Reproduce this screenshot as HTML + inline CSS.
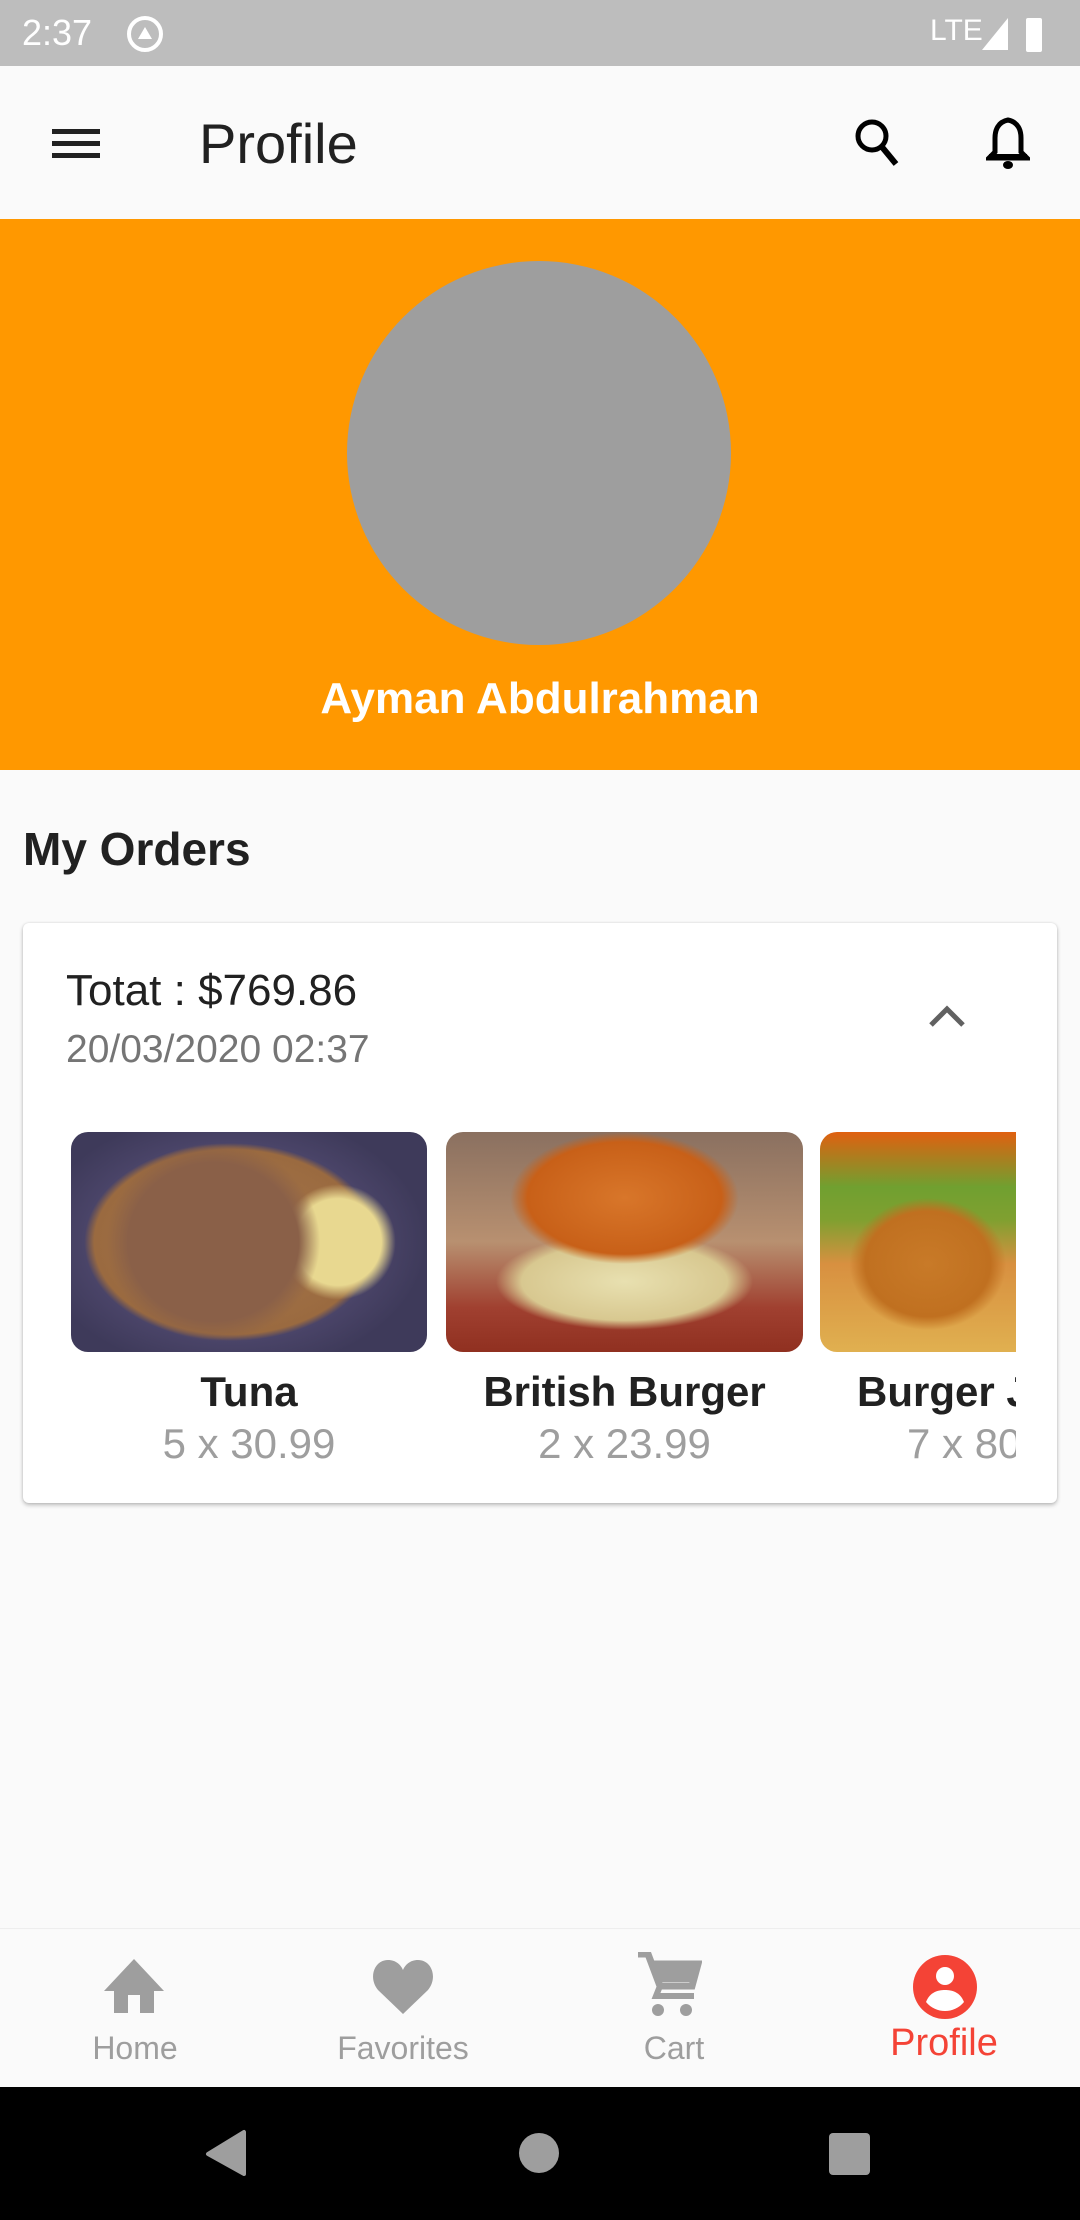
<!DOCTYPE html>
<html><head><meta charset="utf-8"><style>
*{margin:0;padding:0;box-sizing:border-box}
body{width:1080px;height:2220px;background:#fafafa;font-family:"Liberation Sans",sans-serif;position:relative;overflow:hidden}
.abs{position:absolute}
.status{left:0;top:0;width:1080px;height:66px;background:#bdbdbd}
.appbar{left:0;top:66px;width:1080px;height:153px;background:#fafafa}
.orange{left:0;top:219px;width:1080px;height:551px;background:#ff9800}
.card{left:23px;top:923px;width:1034px;height:580px;background:#fff;border-radius:6px;box-shadow:0 2px 4px rgba(0,0,0,.25),0 0 2px rgba(0,0,0,.1)}
.img{top:1132px;height:220px;border-radius:17px;overflow:hidden}
.t{text-align:center;font-weight:bold;color:#212121;font-size:42px}
.q{text-align:center;color:#9e9e9e;font-size:42px}
.nav{left:0;top:1928px;width:1080px;height:159px;background:#fafafa;border-top:1px solid #eee}
.lbl{width:270px;text-align:center;font-size:32px;color:#9e9e9e;top:2030px}
</style></head><body>
<div class="abs status"></div>
<div class="abs" style="left:22px;top:12px;font-size:36px;color:#fff">2:37</div>
<svg class="abs" style="left:125px;top:14px" width="40" height="40" viewBox="0 0 40 40"><circle cx="20" cy="20" r="16" fill="none" stroke="#fff" stroke-width="4"/><path d="M13 25 L20 13 L27 25 Z" fill="#fff"/></svg>
<div class="abs" style="left:930px;top:14px;font-size:30px;color:#fff">LTE</div>
<svg class="abs" style="left:980px;top:14px" width="70" height="40" viewBox="0 0 70 40"><path d="M2 36 L28 4 L28 36 Z" fill="#fff"/><rect x="46" y="4" width="16" height="34" rx="2" fill="#fff"/></svg>
<div class="abs appbar"></div>
<svg class="abs" style="left:50px;top:126px" width="52" height="36" viewBox="0 0 52 36"><rect x="2" y="3" width="48" height="5" fill="#212121"/><rect x="2" y="15" width="48" height="5" fill="#212121"/><rect x="2" y="27" width="48" height="5" fill="#212121"/></svg>
<div class="abs" style="left:199px;top:111px;font-size:56px;color:#212121">Profile</div>
<svg class="abs" style="left:852px;top:116px" width="50" height="54" viewBox="0 0 50 54"><circle cx="20" cy="20" r="14" fill="none" stroke="#000" stroke-width="5"/><path d="M30 31 L44 48" stroke="#000" stroke-width="6"/></svg>
<svg class="abs" style="left:986px;top:116px" width="44" height="56" viewBox="0 0 44 56"><path d="M22 4 C12 6 9 14 9 22 L9 36 L3 42 L41 42 L35 36 L35 22 C35 14 32 6 22 4 Z" fill="none" stroke="#000" stroke-width="5"/><rect x="3" y="38" width="38" height="6" fill="#000"/><ellipse cx="22" cy="49" rx="5" ry="4" fill="#000"/></svg>
<div class="abs orange"></div>
<div class="abs" style="left:347px;top:261px;width:384px;height:384px;border-radius:50%;background:#9e9e9e"></div>
<div class="abs" style="left:0;top:674px;width:1080px;text-align:center;color:#fff;font-weight:bold;font-size:44px">Ayman Abdulrahman</div>
<div class="abs" style="left:23px;top:822px;font-weight:bold;font-size:46px;color:#212121">My Orders</div>
<div class="abs card"></div>
<div class="abs" style="left:66px;top:966px;font-size:44px;color:#212121">Totat : $769.86</div>
<div class="abs" style="left:66px;top:1028px;font-size:39px;color:#757575">20/03/2020 02:37</div>
<svg class="abs" style="left:927px;top:1003px" width="40" height="26" viewBox="0 0 40 26"><path d="M4 22 L20 6 L36 22" fill="none" stroke="#616161" stroke-width="5"/></svg>
<div class="abs img" style="left:71px;width:356px;background:radial-gradient(ellipse 30% 45% at 40% 50%,#8a6048 0,#8a6048 80%,transparent 100%),radial-gradient(circle at 75% 50%,#e8d890 0,#e8d890 15%,transparent 20%),radial-gradient(ellipse 55% 60% at 45% 50%,#a8784a 0,#9a6a40 70%,#4a4468 75%,#3e3a5a 100%)"></div>
<div class="abs img" style="left:446px;width:357px;background:radial-gradient(ellipse 32% 30% at 50% 30%,#d8762a 0,#c86018 85%,transparent 100%),radial-gradient(ellipse 36% 22% at 50% 68%,#e8e0b0 0,#d8c890 80%,transparent 100%),linear-gradient(#8a7060 0%,#b89070 50%,#a04030 80%,#903020 100%)"></div>
<div style="position:absolute;left:820px;top:1132px;width:196px;height:220px;border-radius:17px 0 0 17px;overflow:hidden;background:radial-gradient(ellipse 40% 30% at 55% 60%,#c87a28 0,#c07020 80%,transparent 100%),linear-gradient(#e06010 0%,#70a030 25%,#80a030 40%,#d89040 60%,#e0b050 100%)"></div>
<div class="abs t" style="left:71px;width:356px;top:1368px">Tuna</div>
<div class="abs q" style="left:71px;width:356px;top:1420px">5 x 30.99</div>
<div class="abs t" style="left:446px;width:357px;top:1368px">British Burger</div>
<div class="abs q" style="left:446px;width:357px;top:1420px">2 x 23.99</div>
<div class="abs" style="left:820px;top:1368px;width:196px;height:110px;overflow:hidden">
<div class="t" style="position:absolute;left:37px;top:0;white-space:nowrap">Burger Jr</div>
<div class="q" style="position:absolute;left:87px;top:52px;white-space:nowrap">7 x 80</div></div>
<div class="abs nav"></div>
<svg class="abs" style="left:102px;top:1955px" width="64" height="60" viewBox="0 0 64 60"><path d="M32 4 L62 36 L52 36 L52 58 L38 58 L38 40 L26 40 L26 58 L12 58 L12 36 L2 36 Z" fill="#9e9e9e"/></svg>
<svg class="abs" style="left:370px;top:1956px" width="66" height="60" viewBox="0 0 66 60"><path d="M33 58 L8 34 C-2 22 4 4 18 4 C26 4 31 9 33 14 C35 9 40 4 48 4 C62 4 68 22 58 34 Z" fill="#9e9e9e"/></svg>
<svg class="abs" style="left:636px;top:1952px" width="66" height="66" viewBox="0 0 66 66"><path d="M2 2 L12 2 L24 34 L56 34 L62 12 L18 12" fill="none" stroke="#9e9e9e" stroke-width="7"/><path d="M18 12 L62 12 L56 30 L22 30 Z" fill="#9e9e9e"/><path d="M24 34 L20 44 L58 44" fill="none" stroke="#9e9e9e" stroke-width="6"/><circle cx="22" cy="58" r="6" fill="#9e9e9e"/><circle cx="50" cy="58" r="6" fill="#9e9e9e"/></svg>
<svg class="abs" style="left:912px;top:1954px" width="66" height="66" viewBox="0 0 66 66"><circle cx="33" cy="33" r="32" fill="#f44336"/><circle cx="33" cy="22" r="9" fill="#fff"/><path d="M14 48 C18 38 26 36 33 36 C40 36 48 38 52 48 C47 54 40 57 33 57 C26 57 19 54 14 48 Z" fill="#fff"/></svg>
<div class="abs lbl" style="left:0">Home</div>
<div class="abs lbl" style="left:268px">Favorites</div>
<div class="abs lbl" style="left:539px">Cart</div>
<div class="abs lbl" style="left:809px;color:#f44336;font-size:38px;top:2022px">Profile</div>
<div class="abs" style="left:0;top:2087px;width:1080px;height:133px;background:#000"></div>
<svg class="abs" style="left:200px;top:2128px" width="50" height="50" viewBox="0 0 50 50"><path d="M44 4 L44 46 L8 26 Z" fill="#9e9e9e" stroke="#9e9e9e" stroke-width="4" stroke-linejoin="round"/></svg>
<div class="abs" style="left:519px;top:2133px;width:40px;height:40px;border-radius:50%;background:#9e9e9e"></div>
<div class="abs" style="left:829px;top:2133px;width:41px;height:42px;border-radius:4px;background:#9e9e9e"></div>
</body></html>
